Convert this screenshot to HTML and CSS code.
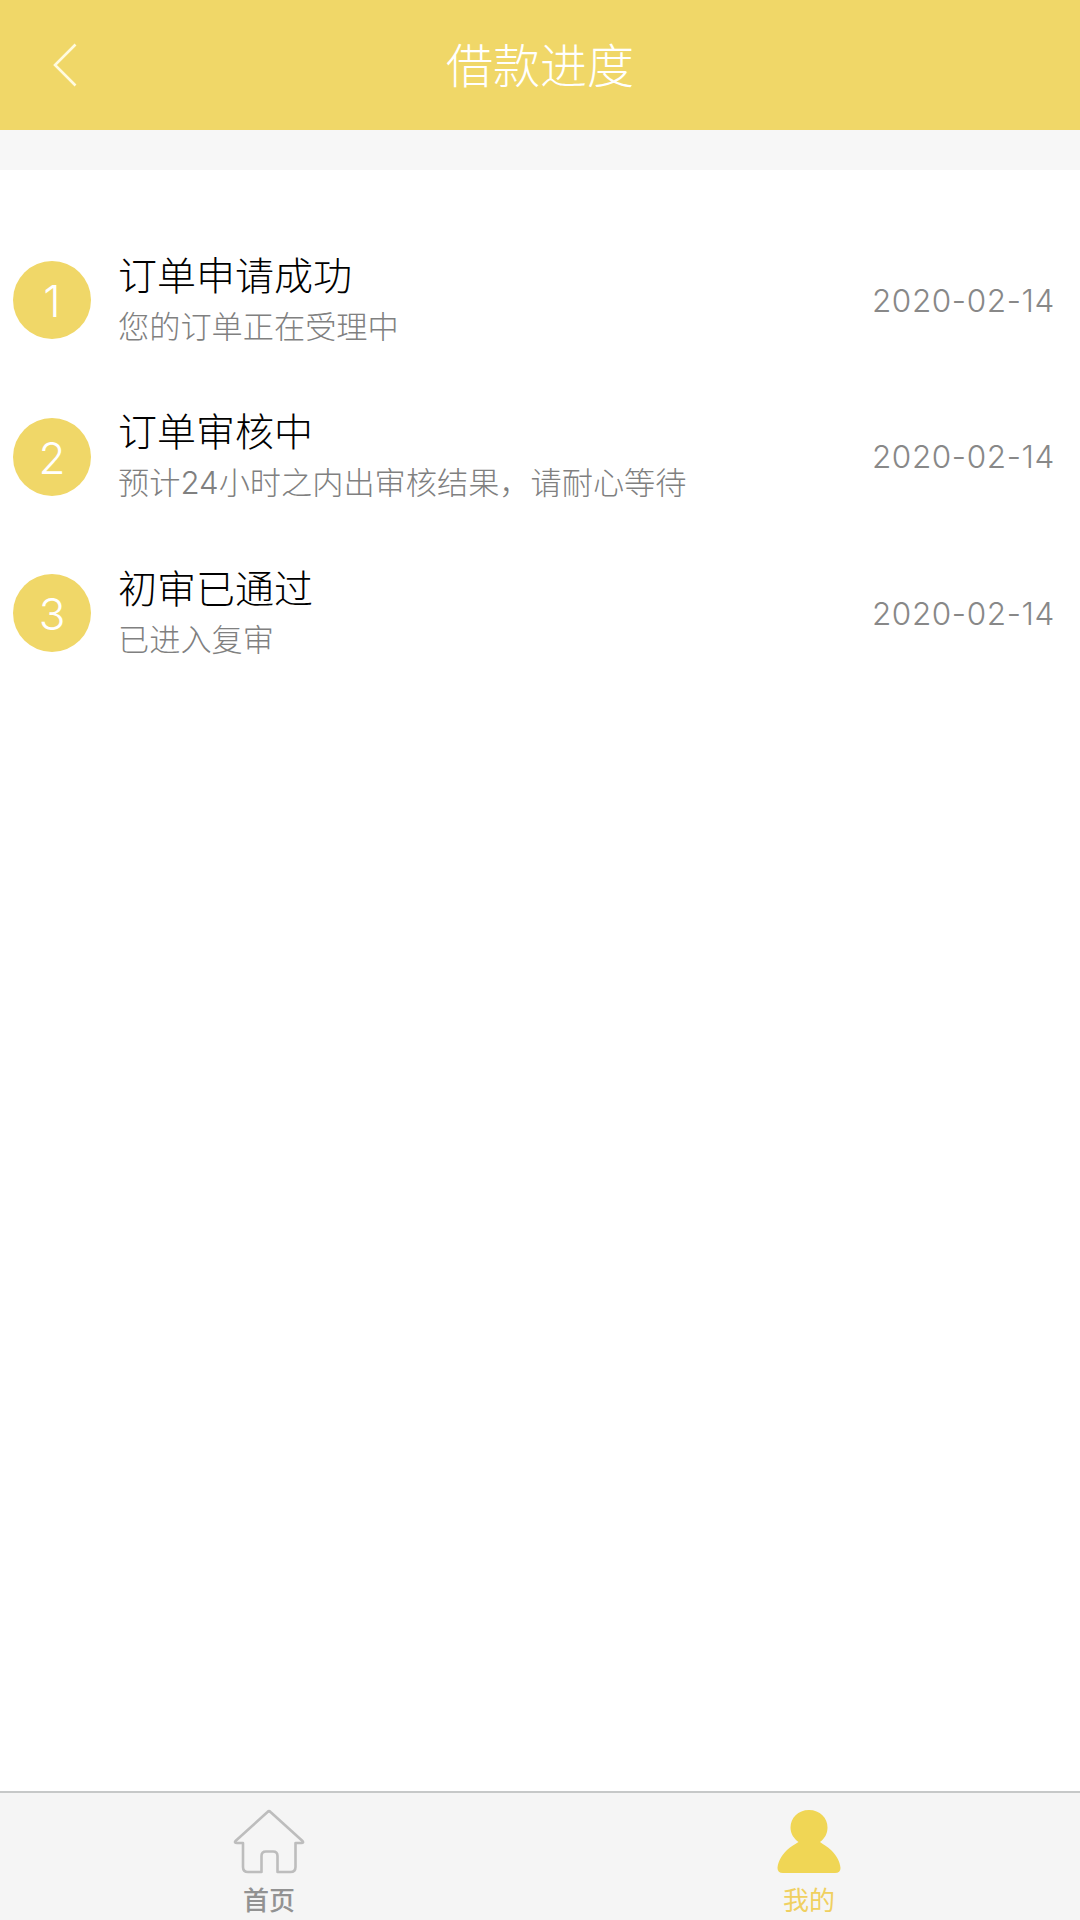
FILE: index.html
```
<!DOCTYPE html>
<html lang="zh-CN">
<head>
  <meta charset="UTF-8">
  <title>借款进度</title>
  <meta name="viewport" content="width=device-width, initial-scale=1.0">
  <link rel="stylesheet" href="styles.css">
</head>
<body>
  <header class="header">
    <a class="back" href="#">
      <svg width="26" height="44" viewBox="0 0 26 44"><path d="M23.500 1.500 3 22l20.500 20.500"/></svg>
    </a>
    <h1>借款进度</h1>
  </header>

  <main class="content">
    <ul class="steps">
      <li class="step">
        <span class="num">1</span>
        <div class="info">
          <h2>订单申请成功</h2>
          <p>您的订单正在受理中</p>
        </div>
        <span class="date">2020-02-14</span>
      </li>
      <li class="step">
        <span class="num">2</span>
        <div class="info">
          <h2>订单审核中</h2>
          <p>预计<span class="digits">24</span>小时之内出审核结果，请耐心等待</p>
        </div>
        <span class="date">2020-02-14</span>
      </li>
      <li class="step">
        <span class="num">3</span>
        <div class="info">
          <h2>初审已通过</h2>
          <p>已进入复审</p>
        </div>
        <span class="date">2020-02-14</span>
      </li>
    </ul>
  </main>

  <nav class="tabbar">
    <a class="tab" href="#">
      <svg class="icon-home" width="72" height="66" viewBox="0 0 72 66"><path d="M34.500 3 Q36 1.500 37.500 3 L69.500 32 Q71 34 68.500 34 H62.500 V58 Q62.500 63 57.500 63 H44.500 V47 Q44.500 42.500 40 42.500 H33 Q28.500 42.500 28.500 47 V63 H15 Q10 63 10 58 V34 H4 Q1 34 2.500 32 Z"/></svg>
      <span>首页</span>
    </a>
    <a class="tab active" href="#">
      <svg class="icon-user" width="72" height="66" viewBox="0 0 72 66"><path d="M36 1C47 1 54.500 9 54.500 18.500C54.500 25 51.500 29.500 47 33C50 35.500 54 37 58 41C64 47 67 53 67.500 59Q67.500 64 62 64H10Q4.500 64 4.500 59C5 53 8 47 14 41C18 37 22 35.500 25.500 33C21 29.500 17.500 25 17.500 18.500C17.500 9 25 1 36 1Z"/></svg>
      <span>我的</span>
    </a>
  </nav>
</body>
</html>
```

FILE: styles.css
```
* {
  box-sizing: border-box;
  margin: 0;
  padding: 0;
}
body {
  display: flex;
  flex-direction: column;
  height: 1920px;
  background: #fff;
  font-family: "Noto Sans CJK SC", sans-serif;
  font-weight: 300;
}
a {
  text-decoration: none;
}
ul {
  list-style: none;
}
.header {
  display: grid;
  grid-template-columns: 130px 1fr 130px;
  align-items: center;
  height: 130px;
  background: #f0d768;
  color: #fff;
}
.header h1 {
  padding-bottom: 4px;
  font-size: 47px;
  font-weight: 300;
  line-height: 70px;
  text-align: center;
}
.back {
  display: flex;
  justify-content: center;
}
.back path {
  fill: none;
  stroke: #fffbe0;
  stroke-width: 2.6;
}
.content {
  flex: 1;
  border-top: 40px solid #f7f7f7;
  padding-top: 52px;
}
.step {
  display: flex;
  align-items: center;
  height: 156.500px;
  padding: 0 26px 0 13px;
}
.num {
  width: 78px;
  height: 78px;
  border-radius: 50%;
  background: #f0d768;
  color: #fff;
  font-family: Inter, sans-serif;
  font-size: 44px;
  font-weight: 300;
  line-height: 80px;
  text-align: center;
}
.info {
  flex: 1;
  margin-left: 27px;
  padding-bottom: 7px;
}
.info h2 {
  color: #000;
  font-size: 39px;
  font-weight: 300;
  line-height: 55px;
}
.info p {
  color: #808080;
  font-size: 31.200px;
  line-height: 47px;
}
.date,
.digits {
  font-family: Inter, sans-serif;
  font-weight: 300;
  line-height: 1;
}
.date {
  margin-right: -1px;
  color: #888;
  font-size: 31.500px;
  letter-spacing: 0.600px;
}
.tabbar {
  display: flex;
  height: 129px;
  border-top: 2px solid #c6c8c8;
  background: #f5f5f5;
}
.tab {
  flex: 1;
  display: flex;
  flex-direction: column;
  align-items: center;
  padding: 16px 2px 0 0;
  color: #929292;
  font-size: 26px;
  font-weight: 500;
}
.tab span {
  margin-top: 6px;
  line-height: 36px;
}
.tab.active {
  color: #f0d060;
  font-weight: 400;
}
.icon-home path {
  fill: none;
  stroke: #bdbdbd;
  stroke-width: 2.6;
  stroke-linejoin: round;
}
.icon-user path {
  fill: #f0d655;
}
```
